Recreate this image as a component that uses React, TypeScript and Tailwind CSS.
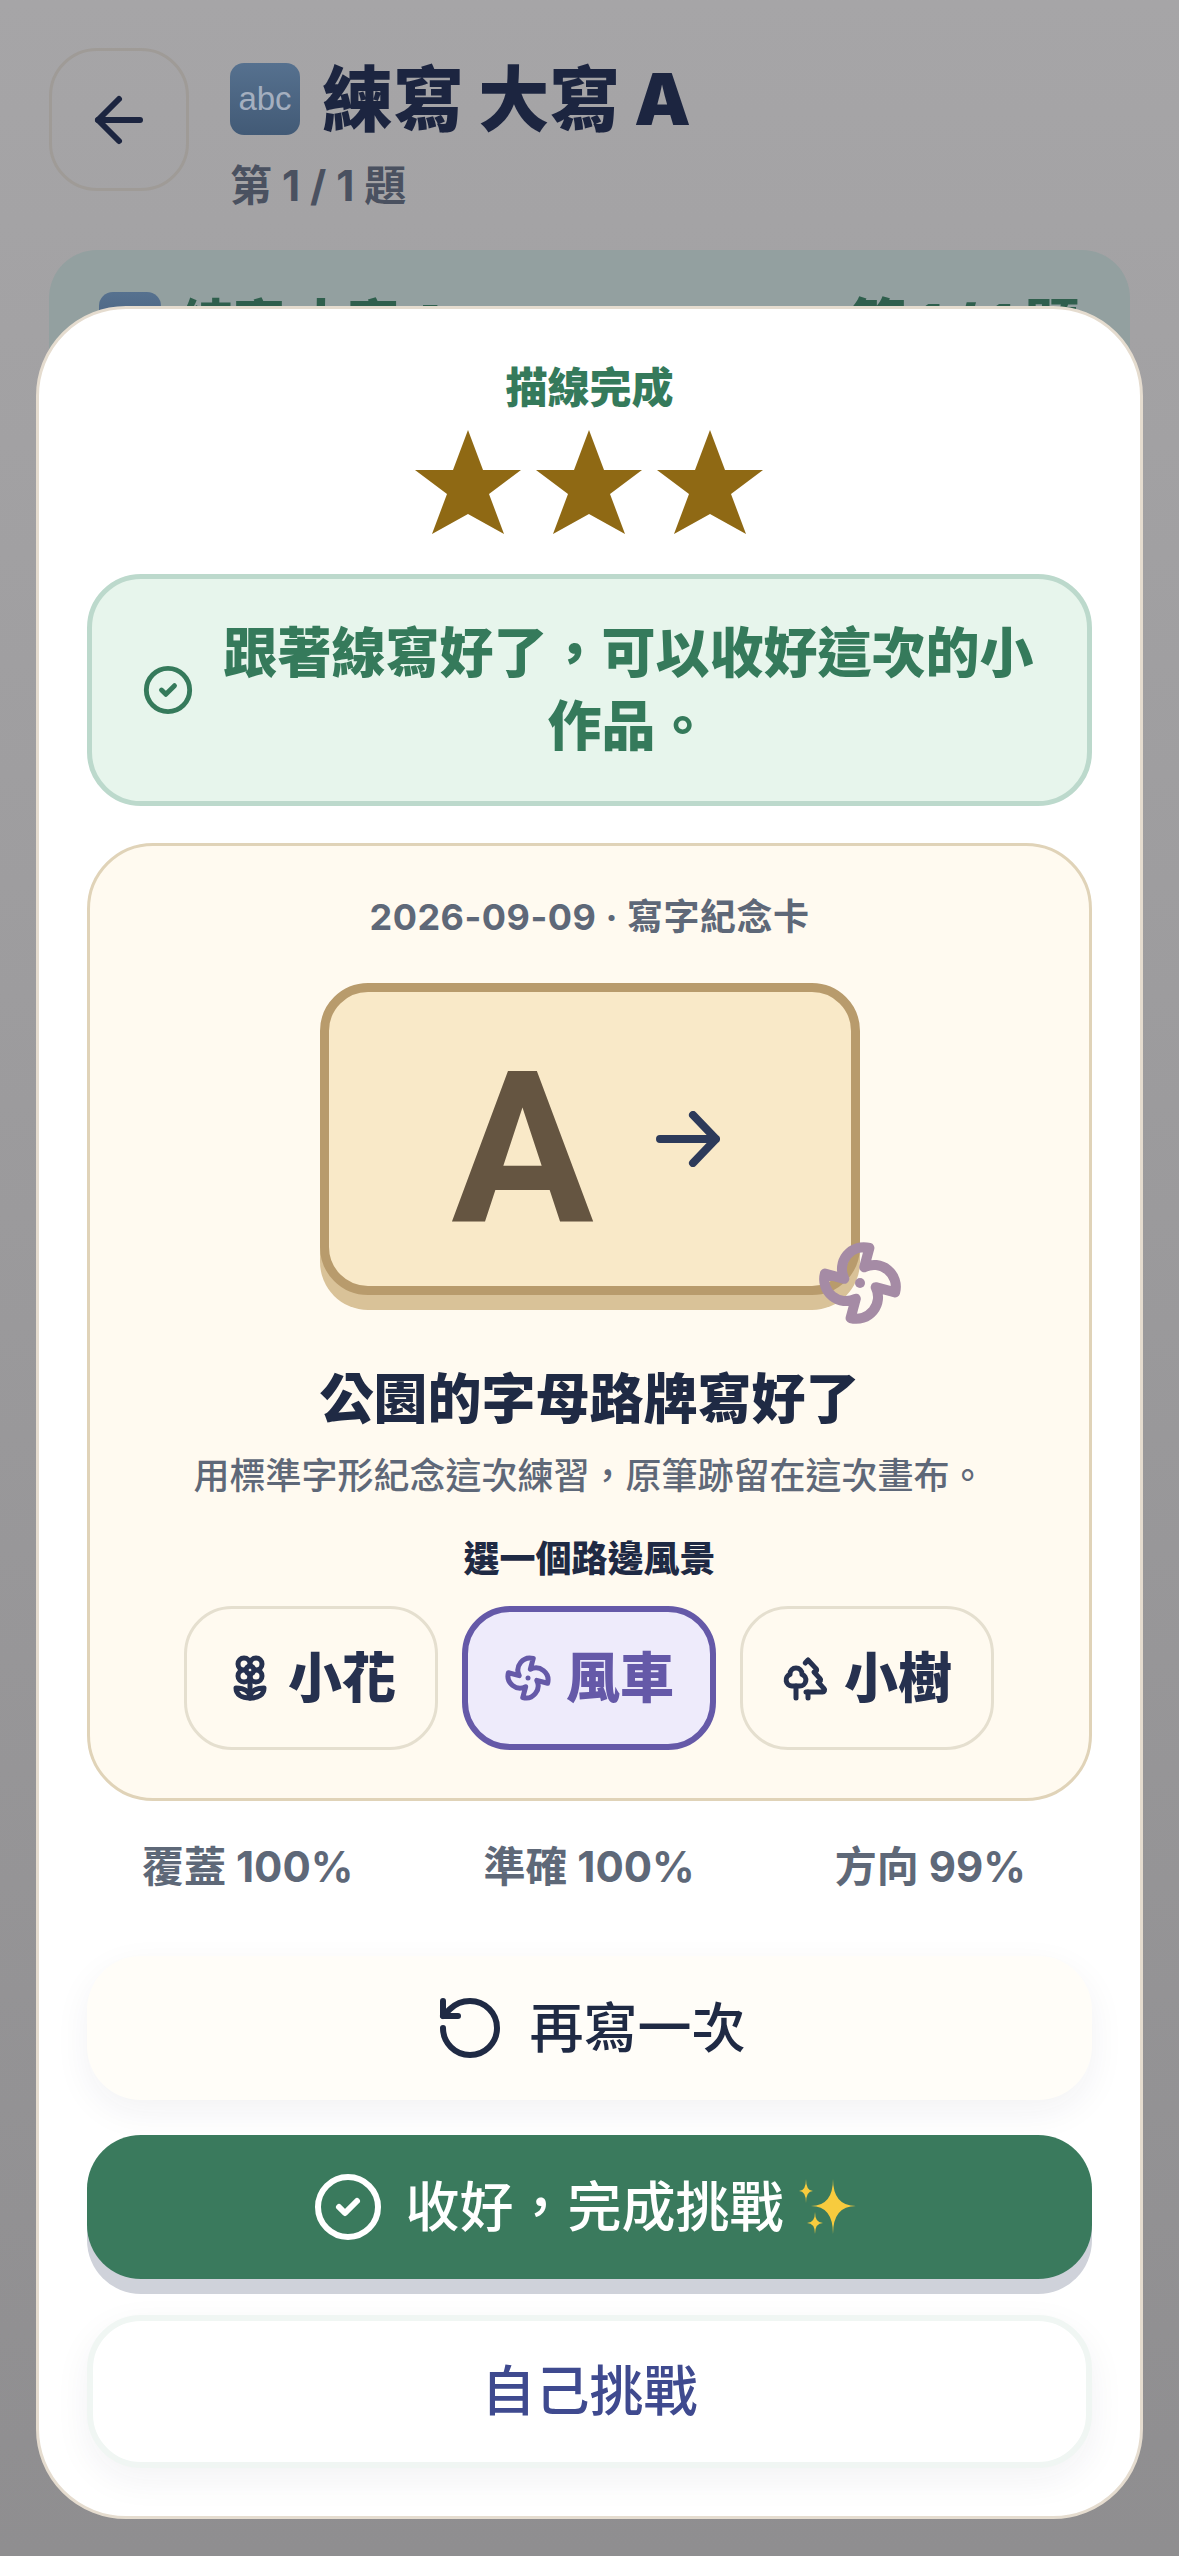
import { ArrowLeft, CircleCheck, Fan, Flower2, RotateCcw, Trees } from 'lucide-react';

const COMMA = '\uFF0C';

const scenery = [
  { label: '小花', Icon: Flower2, box: 'border-[3px] border-[#e5dfcf] text-[#26314f]' },
  { label: '風車', Icon: Fan, box: 'border-[6px] border-[#6559a8] bg-[#eeebfb] text-[#6559a8]' },
  { label: '小樹', Icon: Trees, box: 'border-[3px] border-[#e5dfcf] text-[#26314f]' },
];

function Star() {
  return (
    <svg width="106" height="105" viewBox="0 0 106 105">
      <polygon points="53,0 68,40 106,40 74,64 89,104 53,84 17,104 32,64 0,40 38,40" fill="#8f6914" />
    </svg>
  );
}

function Sparkles() {
  return (
    <svg width="60" height="56" viewBox="0 0 60 56" fill="#f7cb3e">
      <path d="M37 0Q37 27 60 27Q37 27 37 55Q37 27 15 27Q37 27 37 0Z" />
      <path d="M10 0Q10 12 17 12Q10 12 10 24Q10 12 3 12Q10 12 10 0Z" />
      <path d="M19 33Q19 44 27 44Q19 44 19 55Q19 44 11 44Q19 44 19 33Z" />
    </svg>
  );
}

function AbcBadge({ size }: { size: string }) {
  return (
    <span className={`flex items-center justify-center rounded-[14px] bg-gradient-to-b from-[#56718f] to-[#425a76] font-['Liberation_Sans',sans-serif] font-normal text-[#a4afbf] ${size}`}>
      abc
    </span>
  );
}

export default function App() {
  return (
    <div className="relative h-[2556px] overflow-hidden bg-gradient-to-b from-[#a6a5a7] to-[#8f8e90] font-['Inter','Noto_Sans_CJK_TC',sans-serif]">
      {/* page behind the sheet */}
      <header className="flex gap-[41px] px-[49px] pt-[48px]">
        <button className="flex h-[143px] w-[140px] items-center justify-center rounded-[48px] border-[3px] border-[#9f9b97] text-[#1c2540]">
          <ArrowLeft size={72} strokeWidth={2} />
        </button>
        <div className="pt-[15px]">
          <div className="flex items-center gap-[22px] text-[71px] font-black leading-[72px] text-[#1c2540]">
            <AbcBadge size="h-[72px] w-[70px] text-[33px]" />
            <span>練寫 大寫 A</span>
          </div>
          <p className="mt-[30px] text-[42px] font-bold leading-[42px] text-[#4a5160]">第 1 / 1 題</p>
        </div>
      </header>
      <section className="mx-[49px] mt-[43px] h-[500px] rounded-[48px] bg-[#93a0a0] px-[50px] pt-[40px]">
        <div className="flex items-center justify-between text-[56px] font-black leading-[62px] text-[#2f5f4d]">
          <div className="flex items-center gap-[20px]">
            <AbcBadge size="h-[62px] w-[62px] text-[28px]" />
            <span className="pt-[4px] text-[52px]">練寫 大寫 A</span>
          </div>
          <span className="pt-[4px]">第 1 / 1 題</span>
        </div>
      </section>

      {/* result sheet */}
      <div className="absolute left-[36px] top-[306px] h-[2213px] w-[1107px] rounded-[90px] border-[3px] border-[#e5dccf] bg-white px-[48px] pt-[50px]">
        <h2 className="text-center text-[42px] font-black leading-[58px] text-[#357a5b]">描線完成</h2>
        <div className="mt-[13px] flex justify-center gap-[15px] pr-[2px]">
          <Star />
          <Star />
          <Star />
        </div>

        <div className="mt-[39px] flex items-center gap-[24px] rounded-[54px] border-[5px] border-[#bcd9cc] bg-[#e7f5ec] py-[38px] pl-[50px] pr-[48px] text-[#357a5b]">
          <CircleCheck size={52} strokeWidth={2.25} className="shrink-0" />
          <p className="text-center text-[54px] font-black leading-[73px]">跟著線寫好了{COMMA}可以收好這次的小作品。</p>
        </div>

        <div className="mt-[37px] rounded-[66px] border-[3px] border-[#e0d3b8] bg-[#fffaf0] pb-[48px] pt-[46px] text-center">
          <p className="text-[36px] font-bold leading-[50px] tracking-[0.5px] text-[#5e6878]">2026-09-09 · 寫字紀念卡</p>

          <div className="relative mx-auto mt-[41px] flex h-[312px] w-[540px] items-center justify-center gap-[62px] rounded-[48px] border-[9px] border-[#b89b6c] bg-[#f9e9c8] pr-[8px] shadow-[0_15px_0_#d9c298]">
            <span className="pt-[22px] font-['Roboto',sans-serif] text-[212px] font-bold leading-none text-[#655541]">A</span>
            <svg width="64" height="56" viewBox="0 0 64 56" fill="none" stroke="#2d3a5a" strokeWidth="8" strokeLinecap="round" strokeLinejoin="round">
              <path d="M4 28H60M37 4L60 28L37 52" />
            </svg>
            <Fan size={86} strokeWidth={2.8} className="absolute -bottom-[40px] -right-[52px] text-[#a58ba5]" />
          </div>

          <h3 className="mt-[69px] text-[54px] font-black leading-[72px] text-[#1f2a44]">公園的字母路牌寫好了</h3>
          <p className="mt-[15px] text-[36px] font-medium leading-[50px] text-[#5e6878]">用標準字形紀念這次練習{COMMA}原筆跡留在這次畫布。</p>
          <p className="mt-[33px] text-[36px] font-extrabold leading-[50px] text-[#1f2a44]">選一個路邊風景</p>

          <div className="mt-[22px] flex justify-center gap-[24px] pr-[1px]">
            {scenery.map(({ label, Icon, box }) => (
              <button key={label} className={`flex h-[144px] w-[254px] items-center justify-center gap-[14px] rounded-[48px] text-[54px] font-extrabold ${box}`}>
                <Icon size={48} strokeWidth={2.5} />
                {label}
              </button>
            ))}
          </div>
        </div>

        <div className="mt-[39px] flex justify-between pl-[55px] pr-[66px] text-[42px] font-bold leading-[54px] text-[#5e6878]">
          <span>覆蓋 100%</span>
          <span className="mr-[10px]">準確 100%</span>
          <span>方向 99%</span>
        </div>

        <button className="mt-[62px] flex h-[144px] w-full items-center justify-center gap-[24px] rounded-[54px] bg-[#fffdf8] text-[54px] font-medium text-[#1f2a44] shadow-[0_12px_36px_rgba(31,42,68,0.06)]">
          <RotateCcw size={72} strokeWidth={2} />
          再寫一次
        </button>
        <button className="mt-[35px] flex h-[144px] w-full items-center justify-center gap-[22px] rounded-[54px] bg-[#3a7a5d] pr-[12px] text-[54px] font-medium text-white shadow-[0_15px_0_#cfd2da]">
          <CircleCheck size={72} strokeWidth={2} />
          <span className="flex items-center gap-[12px]">
            收好{COMMA}完成挑戰
            <Sparkles />
          </span>
        </button>
        <button className="mt-[36px] h-[153px] w-full rounded-[54px] border-[6px] border-[#f0f6f3] bg-white text-[54px] font-medium text-[#3f4a8f] shadow-[0_12px_36px_rgba(31,42,68,0.06)]">
          自己挑戰
        </button>
      </div>
    </div>
  );
}
